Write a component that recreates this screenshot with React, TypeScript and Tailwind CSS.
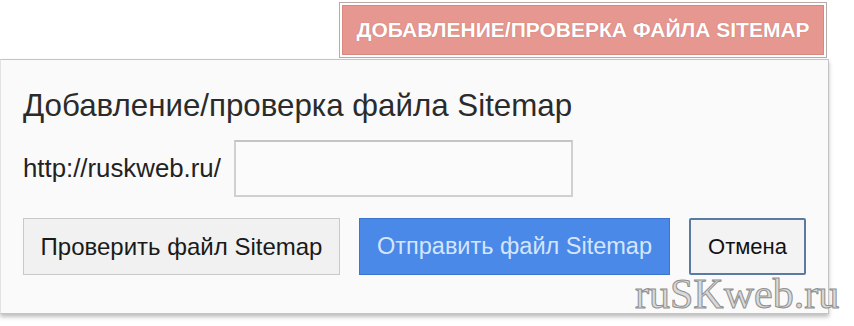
export default function App() {
  return (
    <div className="relative w-[854px] h-[326px] bg-white overflow-hidden font-['Liberation_Sans',Arial,sans-serif]">
      {/* top action */}
      <div className="flex justify-end pr-[27px] pt-[2px]">
        <div className="border border-[#b9a9a7] bg-white p-[2px]">
          <div className="h-[50px] w-[482px] flex items-center justify-center bg-[#e6978f] border border-[#d98880] text-white font-bold text-[21px] [text-shadow:0_0_1px_rgba(150,60,50,0.5)]">
            ДОБАВЛЕНИЕ/ПРОВЕРКА ФАЙЛА SITEMAP
          </div>
        </div>
      </div>

      {/* dialog */}
      <div className="mt-px w-[829px] h-[255px] bg-[#fafafa] border border-[#c4c4c4] border-l-[#e2e2e2] shadow-[0_3px_4px_rgba(0,0,0,0.25)] pl-[22px] pt-[27px]">
        <h1 className="text-[31.3px] leading-[38px] text-[#2b2b2b]">Добавление/проверка файла Sitemap</h1>
        <div className="mt-[15px] flex items-center gap-[13px]">
          <span className="text-[25.8px] text-[#222]">http://ruskweb.ru/</span>
          <div className="w-[339px] h-[57px] border-2 border-[#d0d0d0] border-t-[#c4c4c4] bg-[#fbfbfb]" />
        </div>
        <div className="mt-[21px] flex items-center">
          <button className="w-[317px] h-[57px] bg-[#f1f1f1] border border-[#c9c9c9] text-[24px] text-[#1a1a1a]">
            Проверить файл Sitemap
          </button>
          <button className="ml-[19px] w-[311px] h-[57px] bg-[#4a89e8] border border-[#3a74cf] text-[23.5px] text-[#d4e5ff]">
            Отправить файл Sitemap
          </button>
          <button className="ml-[19px] w-[117px] h-[57px] bg-[#f3f3f3] border-2 border-[#5a7aa6] rounded-[2px] text-[22px] text-[#111]">
            Отмена
          </button>
        </div>
      </div>

      {/* watermark */}
      <div className="absolute left-[635px] top-[273px] font-['Liberation_Serif',serif] text-[42px] leading-[43px] text-[#d9d9d9] [-webkit-text-stroke:1px_#8f8f8f]">
        ruSKweb.ru
      </div>
    </div>
  );
}
